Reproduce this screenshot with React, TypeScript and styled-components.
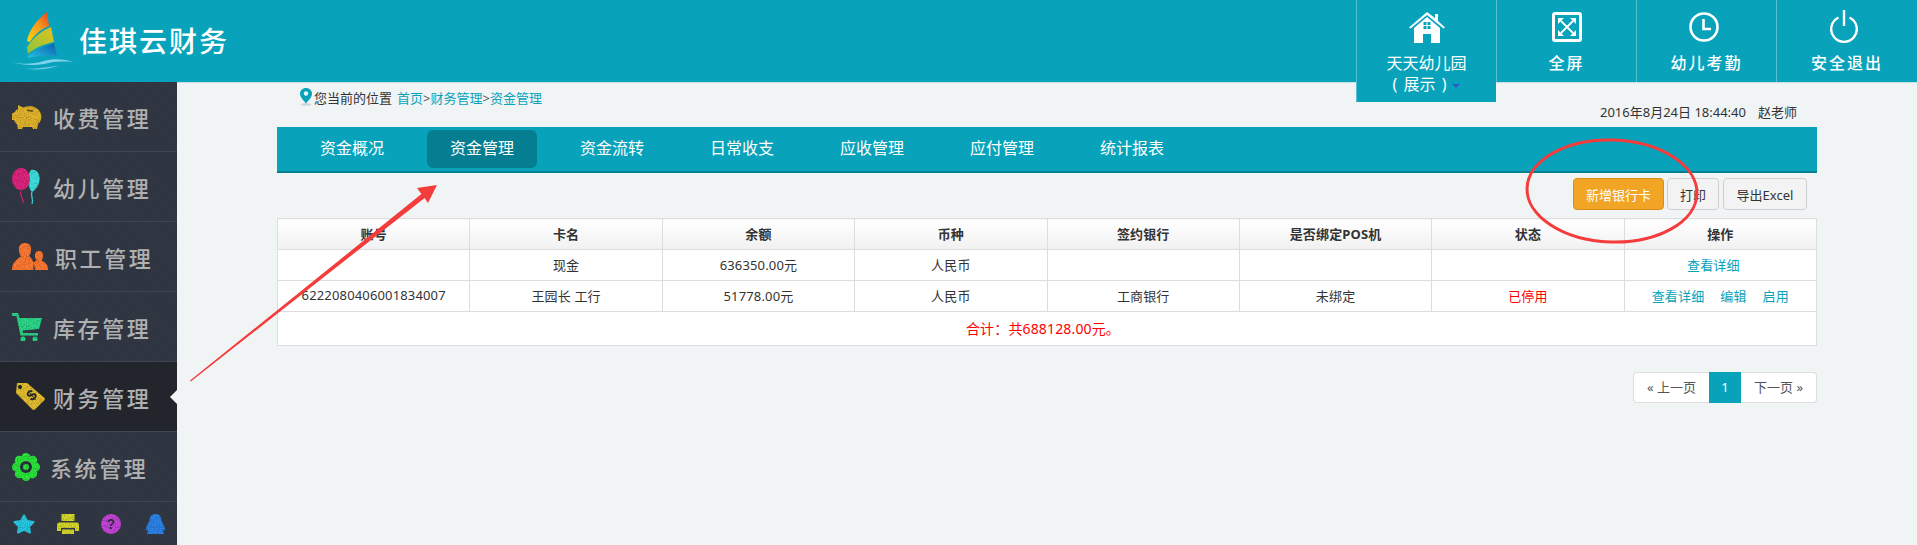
import React from 'react';
import styled, { createGlobalStyle } from 'styled-components';

const teal = '#08a3bb';

const GlobalStyle = createGlobalStyle`
  html, body {
    margin: 0;
    padding: 0;
    background: #f1f4f5;
    font-family: "Noto Sans", "Noto Sans CJK SC", sans-serif;
    font-size: 13px;
    color: #333;
  }
`;

const Logo = () => (
  <svg width="66" height="60" viewBox="0 0 66 60">
    <defs>
      <linearGradient id="sail1" x1="0" y1="1" x2="1" y2="0">
        <stop offset="0" stopColor="#f7d90f" />
        <stop offset="0.55" stopColor="#f59a1d" />
        <stop offset="1" stopColor="#ea3f22" />
      </linearGradient>
      <linearGradient id="sail2" x1="0" y1="1" x2="1" y2="0">
        <stop offset="0" stopColor="#8cc43f" />
        <stop offset="1" stopColor="#e0c21e" />
      </linearGradient>
      <linearGradient id="sail3" x1="0" y1="1" x2="1" y2="0">
        <stop offset="0" stopColor="#27bfe2" />
        <stop offset="1" stopColor="#0b5db0" />
      </linearGradient>
    </defs>
    <path d="M17 30C19 18 28 8 37 1L39 15C31 18 24 24 20 31Z" fill="url(#sail1)" />
    <path d="M17 36C23 27 31 20 41 16L44 31C34 33 25 37 18 43Z" fill="url(#sail2)" />
    <path d="M18 45C25 39 35 35 44 32L47 45C37 44 27 45 18 47Z" fill="url(#sail3)" />
    <path d="M1 51C14 54 24 53 34 50C44 47 54 48 64 51C52 50 44 50 34 53C23 55 12 54 1 51Z" fill="#7fd3ea" />
    <path d="M16 57C26 59 32 56 49 55C38 58 26 60 16 57Z" fill="#6cc8e4" />
  </svg>
);

const HomeIcon = () => (
  <svg width="36" height="32" viewBox="0 0 36 32" fill="#fff">
    <path d="M18 1L26 7V3H29V10L36 16.5L34.5 17.5L18 4L1.500 17.500L0 16.500Z" />
    <path d="M18 6L31 17V32H22V23H14V32H5V17Z" />
    <g fill={teal}>
      <rect x="14.500" y="11" width="3" height="3" />
      <rect x="18.500" y="11" width="3" height="3" />
      <rect x="14.500" y="15" width="3" height="3" />
      <rect x="18.500" y="15" width="3" height="3" />
    </g>
  </svg>
);

const FullIcon = () => (
  <svg width="30" height="30" viewBox="0 0 30 30">
    <rect x="1.500" y="1.500" width="27" height="27" rx="1.500" fill="none" stroke="#fff" strokeWidth="3" />
    <path d="M9 9L21 21M21 9L9 21" stroke="#fff" strokeWidth="1.800" />
    <path d="M6 6H12L6 12Z" fill="#fff" />
    <path d="M24 6V12L18 6Z" fill="#fff" />
    <path d="M6 24V18L12 24Z" fill="#fff" />
    <path d="M24 24H18L24 18Z" fill="#fff" />
  </svg>
);

const ClockIcon = () => (
  <ShiftedIcon>
    <svg width="30" height="30" viewBox="0 0 30 30" fill="none" stroke="#fff" strokeWidth="2.600">
      <circle cx="15" cy="15" r="13.500" />
      <path d="M14.500 7V17H22" />
    </svg>
  </ShiftedIcon>
);

const PowerIcon = () => (
  <ShiftedIcon>
    <svg width="28" height="34" viewBox="0 0 28 34" fill="none" stroke="#fff" strokeWidth="2.400">
      <path d="M14 0V16" />
      <path d="M8.500 7.500A12.800 12.800 0 1 0 19.500 7.500" />
    </svg>
  </ShiftedIcon>
);

const PiggyIcon = () => (
  <svg width="30" height="26" viewBox="0 0 30 26" filter="url(#glitter)">
    <path d="M6 1L11 3.500C17 1 25 2 28 8C30.500 12 29.500 17 26 20L25 25H21L20 23H11L10 25H6L5 20C3.500 19 2.500 17.500 2 16H0V9.500L3 8C3.500 6.500 4.500 5.500 6 5Z" fill="#e3b62e" />
    <rect x="15" y="6" width="6" height="1.500" fill="#6b5418" transform="rotate(8 18 7)" />
  </svg>
);

const BalloonIcon = () => (
  <svg width="28" height="37" viewBox="0 0 28 37" filter="url(#glitter)">
    <path d="M19 2C24 1 28 5 27.500 12C27 18 23 22 20 24C16 20 14 8 19 2Z" fill="#3fe0e0" />
    <path d="M20 24C18 28 22 30 20 36" fill="none" stroke="#3fe0e0" strokeWidth="1.200" />
    <ellipse cx="9" cy="11" rx="9" ry="11" fill="#e0287f" />
    <path d="M9 23C7 27 12 31 11 35" fill="none" stroke="#e0287f" strokeWidth="1.200" />
  </svg>
);

const PeopleIcon = () => (
  <svg width="36" height="28" viewBox="0 0 36 28" filter="url(#glitter)">
    <path d="M27 8C30 8 31.500 10.500 31 13.500C30.800 15 30 16.500 29.500 17.500C32 19.500 36 20 36 27H23C23 24 22 21 20 20L24.500 17.500C23.800 16 23 15 23 13.500C22.500 10.500 24 8 27 8Z" fill="#ff7a35" />
    <path d="M13 0C17.500 0 19.500 3.500 19 7.500C18.800 9.500 18 11.500 17 13C21 16.500 21.500 18 21.500 27H0C0 20 4 17 9 13.500C8 12 7.200 9.500 7 7.500C6.500 3.500 8.500 0 13 0Z" fill="#ff7a35" />
  </svg>
);

const CartIcon = () => (
  <svg width="30" height="28" viewBox="0 0 30 28" filter="url(#glitter)">
    <path d="M0 0H6L7.500 5H30L27 16L10.500 17.500L11 20H26V22.500H8.500L4.500 3H0Z" fill="#2ed88a" />
    <circle cx="11" cy="26" r="2.500" fill="#2ed88a" />
    <circle cx="23" cy="26" r="2.500" fill="#2ed88a" />
  </svg>
);

const TagIcon = () => (
  <svg width="30" height="27" viewBox="0 0 30 27" filter="url(#glitter)">
    <path d="M2 0H12L29.500 15C30 16 30 16.500 29.500 17L20 26.500C19 27 18 27 17 26L1 10Z" fill="#e6c031" />
    <circle cx="5" cy="4" r="2" fill="#23252d" />
    <text x="14" y="19" fontFamily="Liberation Sans, sans-serif" fontSize="15" fontWeight="700" fill="#23252d" transform="rotate(-40 15 15)">$</text>
  </svg>
);

const FlowerIcon = () => (
  <svg width="28" height="28" viewBox="0 0 28 28" filter="url(#glitter)">
    <g fill="#2de63d">
      <circle cx="14" cy="4.500" r="4.500" />
      <circle cx="14" cy="23.500" r="4.500" />
      <circle cx="4.500" cy="14" r="4.500" />
      <circle cx="23.500" cy="14" r="4.500" />
      <circle cx="7.300" cy="7.300" r="4.500" />
      <circle cx="20.700" cy="7.300" r="4.500" />
      <circle cx="7.300" cy="20.700" r="4.500" />
      <circle cx="20.700" cy="20.700" r="4.500" />
      <circle cx="14" cy="14" r="8" />
    </g>
    <circle cx="14" cy="14" r="6" fill="#2f3540" />
    <circle cx="14" cy="14" r="3" fill="#2de63d" />
  </svg>
);

const StarIcon = () => (
  <svg width="22" height="20" viewBox="0 0 22 20" filter="url(#glitter)">
    <path d="M11 1.500L14 7L20.500 8L16 12.500L17 18.500L11 15.800L5 18.500L6 12.500L1.500 8L8 7Z" fill="#2cc9e3" stroke="#2cc9e3" strokeWidth="2" strokeLinejoin="round" />
  </svg>
);

const PrinterIcon = () => (
  <svg width="22" height="20" viewBox="0 0 22 20" filter="url(#glitter)">
    <path d="M4.500 0H17.500V7H4.500ZM2 8.500H20C21 8.500 22 9.500 22 11V17H18V14H4V17H0V11C0 9.500 1 8.500 2 8.500ZM5 15.500H17V20H5Z" fill="#d6d82f" />
  </svg>
);

const HelpIcon = () => (
  <svg width="20" height="20" viewBox="0 0 20 20" filter="url(#glitter)">
    <circle cx="10" cy="10" r="10" fill="#c444d8" />
    <text x="10" y="15" textAnchor="middle" fontFamily="Liberation Sans, sans-serif" fontSize="14" fontWeight="700" fill="#2f3540">?</text>
  </svg>
);

const QqIcon = () => (
  <svg width="21" height="20" viewBox="0 0 21 20" filter="url(#glitter)">
    <path d="M10.500 0C15 0 16.500 3.500 16.500 7C18 9.500 19.500 12 20.500 16.500L18 15.500C18 17 18.500 18 19 20H2C2.500 18 3 17 3 15.500L0.500 16.500C1.500 12 3 9.500 4.500 7C4.500 3.500 6 0 10.500 0Z" fill="#2f84e8" />
  </svg>
);

const menus = [
  { label: '收费管理', icon: <PiggyIcon />, gap: 11 },
  { label: '幼儿管理', icon: <BalloonIcon />, gap: 13 },
  { label: '职工管理', icon: <PeopleIcon />, gap: 7 },
  { label: '库存管理', icon: <CartIcon />, gap: 11 },
  { label: '财务管理', icon: <TagIcon />, gap: 8, active: true, left: 15 },
  { label: '系统管理', icon: <FlowerIcon />, gap: 10 },
];

const App: React.FC = () => {
  return (
    <Page>
      <GlobalStyle />
      <Header>
        <Brand>
          <Logo />
          <BrandName>佳琪云财务</BrandName>
        </Brand>
        <HeaderTabs>
          <HeaderTab $open>
            <TabIcon><HomeIcon /></TabIcon>
            <SchoolName>天天幼儿园</SchoolName>
            <SchoolName>( 展示 )<Caret /></SchoolName>
          </HeaderTab>
          <HeaderTab>
            <TabIcon><FullIcon /></TabIcon>
            <TabLabel>全屏</TabLabel>
          </HeaderTab>
          <HeaderTab>
            <TabIcon><ClockIcon /></TabIcon>
            <TabLabel>幼儿考勤</TabLabel>
          </HeaderTab>
          <HeaderTab>
            <TabIcon><PowerIcon /></TabIcon>
            <TabLabel>安全退出</TabLabel>
          </HeaderTab>
        </HeaderTabs>
      </Header>
      <Body>
        <Sidebar>
          {menus.map((m) => (
            <MenuItem key={m.label} $active={m.active} $gap={m.gap} $left={m.left}>
              {m.icon}
              <span>{m.label}</span>
            </MenuItem>
          ))}
          <ToolRow>
            <StarIcon />
            <PrinterIcon />
            <HelpIcon />
            <QqIcon />
          </ToolRow>
        </Sidebar>
        <Main>
          <Breadcrumb>
            <svg width="12" height="18" viewBox="0 0 12 18">
              <ellipse cx="6" cy="16.500" rx="5" ry="1.200" fill="#c9d6d8" />
              <path d="M6 0C9.500 0 12 2.500 12 5.800C12 9 8.500 12.500 6 15.500C3.500 12.500 0 9 0 5.800C0 2.500 2.500 0 6 0Z" fill={teal} />
              <circle cx="6" cy="5.500" r="2.200" fill="#f1f4f5" />
            </svg>
            <span>您当前的位置</span>
            <Crumbs>
              <CrumbLink>首页</CrumbLink>&gt;<CrumbLink>财务管理</CrumbLink>&gt;<CrumbLink>资金管理</CrumbLink>
            </Crumbs>
          </Breadcrumb>
          <UserLine>
            <span>2016年8月24日 18:44:40</span>
            <span>赵老师</span>
          </UserLine>
          <Nav>
            <NavItem>资金概况</NavItem>
            <NavItem $active>资金管理</NavItem>
            <NavItem>资金流转</NavItem>
            <NavItem>日常收支</NavItem>
            <NavItem>应收管理</NavItem>
            <NavItem>应付管理</NavItem>
            <NavItem>统计报表</NavItem>
          </Nav>
          <Toolbar>
            <PrimaryButton>新增银行卡</PrimaryButton>
            <PlainButton $width={52}>打印</PlainButton>
            <PlainButton $width={84}>导出Excel</PlainButton>
          </Toolbar>
          <Table>
            <thead>
              <tr>
                <th>账号</th>
                <th>卡名</th>
                <th>余额</th>
                <th>币种</th>
                <th>签约银行</th>
                <th>是否绑定POS机</th>
                <th>状态</th>
                <th>操作</th>
              </tr>
            </thead>
            <tbody>
              <tr>
                <td></td>
                <td>现金</td>
                <td>636350.00元</td>
                <td>人民币</td>
                <td></td>
                <td></td>
                <td></td>
                <td><OpLink $trail>查看详细</OpLink></td>
              </tr>
              <tr>
                <td>6222080406001834007</td>
                <td>王园长 工行</td>
                <td>51778.00元</td>
                <td>人民币</td>
                <td>工商银行</td>
                <td>未绑定</td>
                <td><Disabled>已停用</Disabled></td>
                <td>
                  <OpLink>查看详细</OpLink>
                  <OpLink>编辑</OpLink>
                  <OpLink>启用</OpLink>
                </td>
              </tr>
              <tr>
                <TotalCell colSpan={8}>合计：共688128.00元。</TotalCell>
              </tr>
            </tbody>
          </Table>
          <Pager>
            <PageLink $width={76}>« 上一页</PageLink>
            <PageLink $width={32} $active>1</PageLink>
            <PageLink $width={76}>下一页 »</PageLink>
          </Pager>
        </Main>
      </Body>
      <Marks width="1917" height="545" viewBox="0 0 1917 545">
        <polygon points="190,380.500 190.800,381.500 424.600,198 428,203 437,185 417,188 421.400,194" fill="#f43c3c" />
        <ellipse cx="1612" cy="191" rx="85" ry="51" fill="none" stroke="#f43c3c" strokeWidth="3" transform="rotate(2 1612 191)" />
      </Marks>
      <svg width="0" height="0" style={{ position: 'absolute' }}>
        <filter id="glitter" x="0" y="0" width="100%" height="100%">
          <feTurbulence type="fractalNoise" baseFrequency="1.100" numOctaves="2" result="n" />
          <feColorMatrix in="n" type="matrix" values="0 0 0 0 0  0 0 0 0 0  0 0 0 0 0  0 0 0 1.100 -0.420" result="speck" />
          <feComposite in="speck" in2="SourceAlpha" operator="in" result="dots" />
          <feMerge>
            <feMergeNode in="SourceGraphic" />
            <feMergeNode in="dots" />
          </feMerge>
        </filter>
      </svg>
    </Page>
  );
};

const Page = styled.div`
  position: relative;
  width: 1917px;
  height: 545px;
  overflow: hidden;
`;

const Header = styled.header`
  display: flex;
  justify-content: space-between;
  align-items: flex-start;
  height: 82px;
  background: ${teal};
`;

const Brand = styled.div`
  display: flex;
  align-items: center;
  height: 82px;
  padding-left: 10px;
  gap: 3px;
`;

const BrandName = styled.div`
  color: #fff;
  font-size: 28px;
  letter-spacing: 2px;
  font-weight: 500;
  line-height: 1;
`;

const HeaderTabs = styled.nav`
  display: flex;
  align-items: flex-start;
  position: relative;
  z-index: 2;
`;

const HeaderTab = styled.div<{ $open?: boolean }>`
  display: flex;
  flex-direction: column;
  align-items: center;
  width: 140px;
  height: ${({ $open }) => ($open ? 102 : 82)}px;
  box-sizing: border-box;
  padding-top: 9px;
  background: ${teal};
  border-left: 1px solid #56bfd0;
  color: #fff;

  &:last-child {
    width: 141px;
  }
`;

const TabIcon = styled.div`
  display: flex;
  align-items: center;
  justify-content: center;
  height: 36px;
  margin-bottom: 8px;
`;

const ShiftedIcon = styled.div`
  display: flex;
  margin-right: 6px;
`;

const TabLabel = styled.div`
  font-size: 16px;
  letter-spacing: 2px;
  font-weight: 500;
  line-height: 21px;
`;

const SchoolName = styled.div`
  font-size: 16px;
  line-height: 21px;
  white-space: nowrap;
  word-spacing: 2px;
`;

const Caret = styled.i`
  display: inline-block;
  margin-left: 6px;
  border: 4px solid transparent;
  border-top-color: #2a5bd0;
  border-bottom: 0;
  vertical-align: middle;
`;

const Body = styled.div`
  display: flex;
  height: 463px;
`;

const Sidebar = styled.aside`
  flex: 0 0 177px;
  display: flex;
  flex-direction: column;
  background-color: #2f3540;
  background-image: repeating-linear-gradient(45deg, rgba(255, 255, 255, 0.015) 0 1px, transparent 1px 3px);
`;

const MenuItem = styled.div<{ $active?: boolean; $gap: number; $left?: number }>`
  position: relative;
  display: flex;
  align-items: center;
  flex: 0 0 70px;
  box-sizing: border-box;
  padding-left: ${({ $left }) => $left ?? 12}px;
  gap: ${({ $gap }) => $gap}px;
  border-bottom: 1px solid #3f4651;
  background-color: ${({ $active }) => ($active ? '#23252d' : 'transparent')};
  color: #b0b0b0;
  font-size: 22px;
  letter-spacing: 2.600px;
  font-weight: 500;

  ${({ $active }) =>
    $active &&
    `&::after {
      content: '';
      position: absolute;
      right: 0;
      top: 28px;
      border: 7px solid transparent;
      border-left: 0;
      border-right-color: #f1f4f5;
    }`}
`;

const ToolRow = styled.div`
  display: grid;
  grid-template-columns: 44px 44px 44px 21px;
  align-items: center;
  height: 43px;
  padding-left: 13px;
  box-sizing: border-box;
`;

const Main = styled.main`
  flex: 1;
  padding: 5px 100px 0;
  border-top: 1px solid #c6dfe4;
`;

const Breadcrumb = styled.div`
  display: flex;
  align-items: center;
  gap: 2px;
  height: 18px;
  padding-left: 23px;
  white-space: nowrap;
`;

const Crumbs = styled.span`
  margin-left: 3px;
  color: #555;
`;

const CrumbLink = styled.a`
  color: ${teal};
`;

const UserLine = styled.div`
  display: flex;
  justify-content: flex-end;
  gap: 12px;
  height: 12px;
  line-height: 12px;
  margin-bottom: 9px;
  padding-right: 20px;
`;

const Nav = styled.nav`
  display: flex;
  gap: 20px;
  height: 46px;
  box-sizing: border-box;
  padding: 3px 0 0 20px;
  background: ${teal};
  border-bottom: 2px solid #067f91;
`;

const NavItem = styled.a<{ $active?: boolean }>`
  width: 110px;
  height: 38px;
  line-height: 37px;
  text-align: center;
  border-radius: 6px;
  color: #fff;
  font-size: 16px;
  background: ${({ $active }) => ($active ? '#057e92' : 'transparent')};
`;

const Toolbar = styled.div`
  display: flex;
  justify-content: flex-end;
  gap: 4px;
  margin-top: 5px;
  padding-right: 10px;
`;

const PrimaryButton = styled.button`
  width: 91px;
  height: 32px;
  margin-right: -1px;
  padding: 0;
  border: 1px solid #d98c16;
  border-radius: 4px;
  background: #f2a524;
  color: #fff;
  font: inherit;
  font-size: 13px;
`;

const PlainButton = styled.button<{ $width: number }>`
  width: ${({ $width }) => $width}px;
  height: 32px;
  padding: 0;
  border: 1px solid #d0d0d0;
  border-radius: 4px;
  background: #f3f3f3;
  color: #333;
  font: inherit;
  font-size: 13px;
`;

const Table = styled.table`
  width: 100%;
  margin-top: 8px;
  table-layout: fixed;
  border-collapse: collapse;
  background: #fff;

  th,
  td {
    height: 31px;
    padding: 0 0 2px;
    box-sizing: border-box;
    border: 1px solid #ddd;
    text-align: center;
    font-size: 13px;
    letter-spacing: 0.150px;
  }

  th {
    font-weight: 700;
    background: linear-gradient(#fff, #f1f1f1);
  }
`;

const OpLink = styled.a<{ $trail?: boolean }>`
  margin: 0 8px;
  margin-right: ${({ $trail }) => ($trail ? 22 : 8)}px;
  color: ${teal};
`;

const Disabled = styled.span`
  color: #f00;
`;

const TotalCell = styled.td`
  && {
    height: 34px;
    padding-right: 8px;
    color: #f00;
    font-size: 14px;
  }
`;

const Pager = styled.div`
  display: flex;
  justify-content: flex-end;
  margin-top: 26px;
`;

const PageLink = styled.a<{ $width: number; $active?: boolean }>`
  width: ${({ $width }) => $width}px;
  height: 31px;
  box-sizing: border-box;
  line-height: 28px;
  text-align: center;
  border: 1px solid ${({ $active }) => ($active ? teal : '#ddd')};
  background: ${({ $active }) => ($active ? teal : '#fff')};
  color: ${({ $active }) => ($active ? '#fff' : '#555')};

  &:first-child {
    border-radius: 4px 0 0 4px;
    border-right: 0;
  }

  &:last-child {
    border-radius: 0 4px 4px 0;
    border-left: 0;
  }
`;

const Marks = styled.svg`
  position: absolute;
  top: 0;
  left: 0;
  z-index: 5;
  pointer-events: none;
`;

export default App;
